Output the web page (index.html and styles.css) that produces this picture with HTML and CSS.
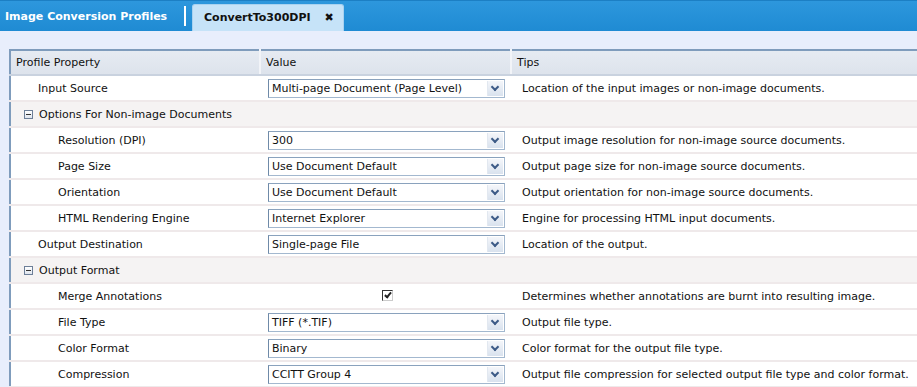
FILE: index.html
```html
<!DOCTYPE html>
<html lang="en">
<head>
  <meta charset="UTF-8">
  <title>Image Conversion Profiles</title>
  <link rel="stylesheet" href="styles.css">
</head>
<body>
  <!-- Top bar -->
  <div class="topbar">
    <div class="app-title">Image Conversion Profiles</div>
    <div class="sep"></div>
    <div class="tab">ConvertTo300DPI <span class="close">&#10006;</span></div>
  </div>

  <div class="content">
    <table class="grid">
      <colgroup>
        <col class="c1"><col class="c2"><col class="c3">
      </colgroup>
      <tr class="head">
        <th>Profile Property</th><th>Value</th><th>Tips</th>
      </tr>
      <tr>
        <td class="l1">Input Source</td>
        <td><div class="select">Multi-page Document (Page Level)<span class="drop"></span></div></td>
        <td class="tip">Location of the input images or non-image documents.</td>
      </tr>
      <tr class="group">
        <td colspan="3"><span class="minus"></span>Options For Non-image Documents</td>
      </tr>
      <tr>
        <td class="l2">Resolution (DPI)</td>
        <td><div class="select">300<span class="drop"></span></div></td>
        <td class="tip">Output image resolution for non-image source documents.</td>
      </tr>
      <tr>
        <td class="l2">Page Size</td>
        <td><div class="select">Use Document Default<span class="drop"></span></div></td>
        <td class="tip">Output page size for non-image source documents.</td>
      </tr>
      <tr>
        <td class="l2">Orientation</td>
        <td><div class="select">Use Document Default<span class="drop"></span></div></td>
        <td class="tip">Output orientation for non-image source documents.</td>
      </tr>
      <tr>
        <td class="l2">HTML Rendering Engine</td>
        <td><div class="select">Internet Explorer<span class="drop"></span></div></td>
        <td class="tip">Engine for processing HTML input documents.</td>
      </tr>
      <tr>
        <td class="l1">Output Destination</td>
        <td><div class="select">Single-page File<span class="drop"></span></div></td>
        <td class="tip">Location of the output.</td>
      </tr>
      <tr class="group">
        <td colspan="3"><span class="minus"></span>Output Format</td>
      </tr>
      <tr>
        <td class="l2">Merge Annotations</td>
        <td class="center"><span class="check"></span></td>
        <td class="tip">Determines whether annotations are burnt into resulting image.</td>
      </tr>
      <tr>
        <td class="l2">File Type</td>
        <td><div class="select">TIFF (*.TIF)<span class="drop"></span></div></td>
        <td class="tip">Output file type.</td>
      </tr>
      <tr>
        <td class="l2">Color Format</td>
        <td><div class="select">Binary<span class="drop"></span></div></td>
        <td class="tip">Color format for the output file type.</td>
      </tr>
      <tr>
        <td class="l2">Compression</td>
        <td><div class="select">CCITT Group 4<span class="drop"></span></div></td>
        <td class="tip">Output file compression for selected output file type and color format.</td>
      </tr>
    </table>
  </div>
</body>
</html>
```

FILE: styles.css
```css
body {
  margin: 0;
  font-family: "DejaVu Sans", Verdana, sans-serif;
  font-size: 11px;
  color: #111;
  background: #e8eefc;
  overflow: hidden;
}
.topbar {
  height: 31px;
  background: linear-gradient(#2d97dd, #1f8bd3);
  border-top: 1px solid #1c7fc4;
  display: flex;
  align-items: flex-end;
  box-sizing: border-box;
}
.app-title {
  color: #fff;
  font-weight: bold;
  font-size: 11px;
  padding: 0 0 8px 5px;
  width: 179px;
}
.sep {
  width: 2px;
  height: 20px;
  background: #fff;
  margin-bottom: 5px;
}
.tab {
  margin-left: 6px;
  width: 152px;
  height: 27px;
  box-sizing: border-box;
  padding: 6px 0 0 11px;
  background: #c6e3f8;
  border: 1px solid #a9d2f0;
  border-bottom: none;
  border-radius: 3px 3px 0 0;
  font-weight: bold;
  color: #111;
}
.close {
  font-size: 11px;
  margin-left: 10px;
}
.content {
  padding: 18px 0 0 9px;
}
.grid {
  border-collapse: collapse;
  width: 930px;
  table-layout: fixed;
  border-top: 2px solid #7f9cbc;
  border-left: 2px solid #7f9cbc;
  background: #fff;
}
.c1 { width: 250px; }
.c2 { width: 251px; }
.grid td, .grid th {
  height: 24px;
  padding: 0;
  white-space: nowrap;
  border-bottom: 2px solid #efe9ea;
}
.head th {
  text-align: left;
  font-weight: normal;
  padding-left: 5px;
  background: linear-gradient(#e6ebf2, #dde3ec);
  border-right: 2px solid #f2f4f8;
  border-bottom: 2px solid #c9d2df;
  height: 23px;
}
.l1 { padding-left: 27px !important; }
.l2 { padding-left: 47px !important; }
.tip { padding-left: 11px !important; }
.center { text-align: center; }
.group td {
  background: #f5f3f3;
  padding-left: 13px;
}
.minus {
  display: inline-block;
  width: 7px;
  height: 7px;
  border: 1px solid #6d7f98;
  background: linear-gradient(#ffffff, #dfe5ee);
  margin-right: 6px;
  position: relative;
  vertical-align: -1px;
}
.minus::after {
  content: "";
  position: absolute;
  left: 1px;
  top: 3px;
  width: 5px;
  height: 1px;
  background: #333;
}
.select {
  margin-left: 8px;
  width: 237px;
  height: 19px;
  box-sizing: border-box;
  border: 1px solid #a3b8cf;
  border-left-color: #6f8aa8;
  border-top-color: #8aa2bd;
  padding: 2px 0 0 3px;
  position: relative;
  background: #fff;
}
.drop {
  position: absolute;
  right: 1px;
  top: 1px;
  width: 15px;
  height: 15px;
  background: linear-gradient(#f4f6fa, #d9e2ee);
  border-left: 1px solid #e2e8f0;
}
.drop::after {
  content: "";
  position: absolute;
  left: 4px;
  top: 3px;
  width: 4px;
  height: 4px;
  border-right: 2px solid #3d5b87;
  border-bottom: 2px solid #3d5b87;
  transform: rotate(45deg);
}
.check {
  display: inline-block;
  width: 9px;
  height: 9px;
  border: 1px solid #333;
  border-right-color: #ccc;
  border-bottom-color: #ccc;
  position: relative;
  vertical-align: -1px;
  margin-left: 4px;
}
.check::after {
  content: "";
  position: absolute;
  left: 3px;
  top: 0;
  width: 2px;
  height: 5px;
  border-right: 2px solid #222;
  border-bottom: 2px solid #222;
  transform: rotate(40deg);
}
```
